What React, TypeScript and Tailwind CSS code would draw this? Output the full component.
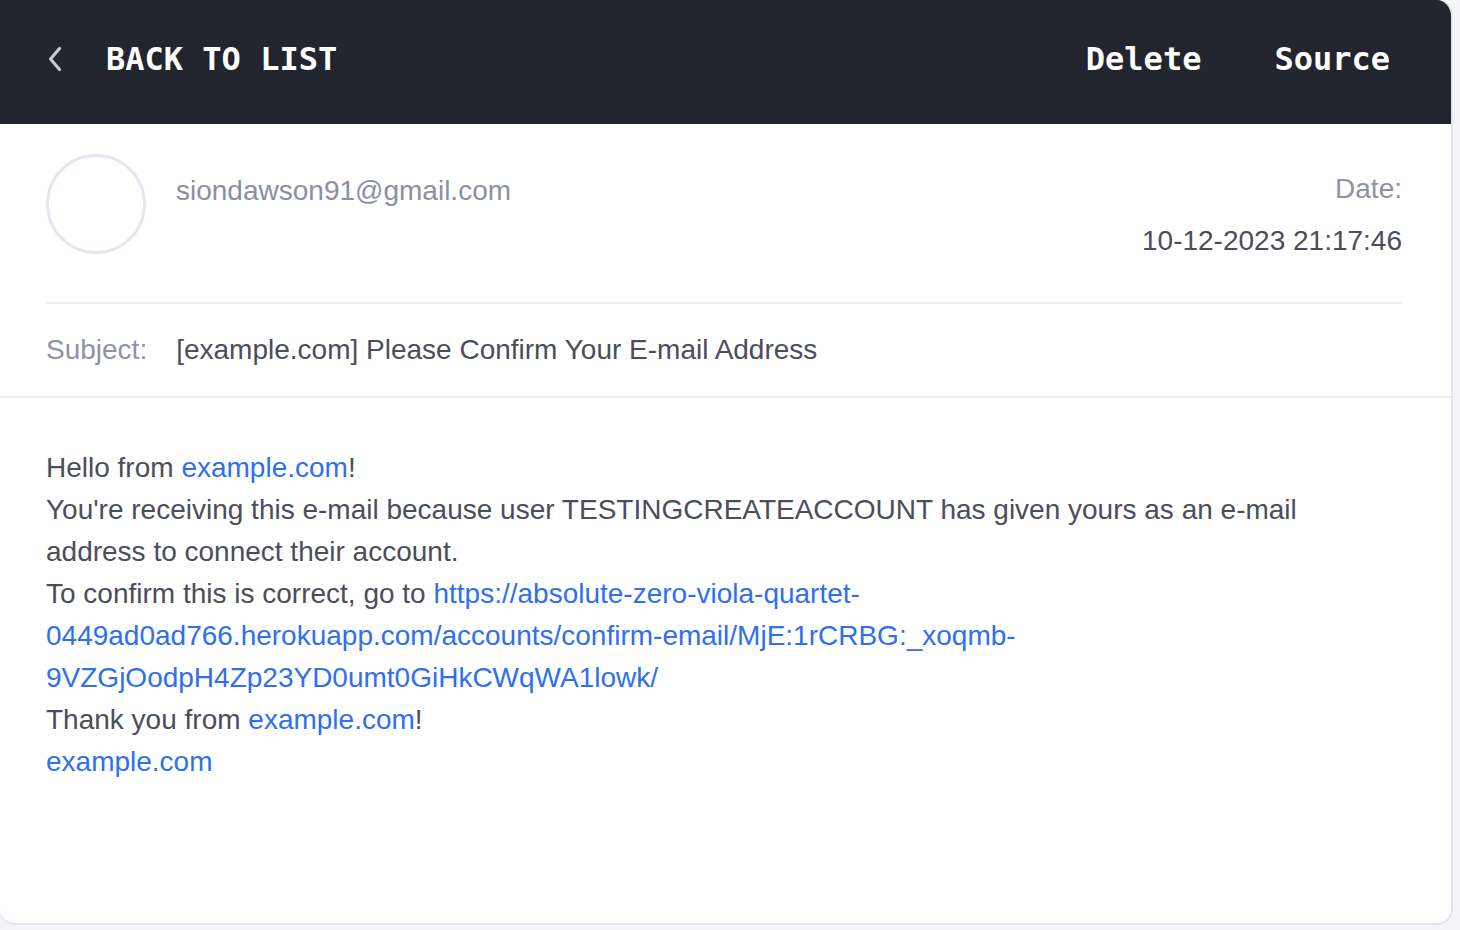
const SANS = 'font-["Liberation_Sans",Arial,sans-serif]';

function ChevronLeft() {
  return (
    <svg width="16" height="26" viewBox="0 0 16 26" fill="none" className="shrink-0">
      <path d="M12.5 2.5 L3.5 13 L12.5 23.5" stroke="#c9c9d3" strokeWidth={3.2} strokeLinecap="round" strokeLinejoin="round" />
    </svg>
  );
}

function Link({ children }: { children: React.ReactNode }) {
  return <a className="text-[#2f6ff0]">{children}</a>;
}

export default function App() {
  return (
    <div className="min-h-[930px] w-[1460px] bg-[#f4f4f8]">
      <div className={`w-[1453px] h-[925px] bg-white border-r-2 border-b-2 border-[#e4e4ee] rounded-br-[16px] rounded-bl-[16px] rounded-tr-[16px] overflow-hidden flex flex-col ${SANS}`}>
        {/* Top bar */}
        <div className="h-[124px] shrink-0 bg-[#22252d] flex items-center justify-between pl-[47px] pr-[61px] pb-[7px] font-['DejaVu_Sans_Mono',monospace] font-bold text-[32px] text-white">
          <div className="flex items-center gap-[43px]">
            <ChevronLeft />
            <span>BACK TO LIST</span>
          </div>
          <div className="flex items-center gap-[73px]">
            <span>Delete</span>
            <span>Source</span>
          </div>
        </div>

        {/* Header info */}
        <div className="pl-[46px] pr-[49px]">
          <div className="flex justify-between pt-[30px] pb-[40px] border-b-2 border-[#ececf3]">
            <div className="flex items-start gap-[30px]">
              <div className="w-[100px] h-[100px] rounded-full border-[3px] border-[#e6e6f0]" />
              <div className="pt-[16px] text-[28px] leading-[42px] text-[#8b8fa2]">siondawson91@gmail.com</div>
            </div>
            <div className="flex flex-col items-end text-[28px] leading-[42px]">
              <div className="mt-[14px] text-[#8e92a5]">Date:</div>
              <div className="mt-[10px] text-[#4b4e5a]">10-12-2023 21:17:46</div>
            </div>
          </div>
        </div>
        <div className="px-[46px]">
          <div className="flex gap-[29px] py-[25px] text-[28px] leading-[42px]">
            <span className="text-[#8e92a5]">Subject:</span>
            <span className="text-[#4b4e5a]">[example.com] Please Confirm Your E-mail Address</span>
          </div>
        </div>
        <div className="border-b-2 border-[#ececf3]" />

        {/* Body */}
        <div className="px-[46px] pt-[49px] text-[28px] leading-[42px] text-[#4b4e5a] whitespace-nowrap">
          <div>
            Hello from <Link>example.com</Link>!
          </div>
          <div>You're receiving this e-mail because user TESTINGCREATEACCOUNT has given yours as an e-mail</div>
          <div>address to connect their account.</div>
          <div>
            To confirm this is correct, go to{' '}
            <Link>
              https://absolute-zero-viola-quartet-
              <br />
              0449ad0ad766.herokuapp.com/accounts/confirm-email/MjE:1rCRBG:_xoqmb-
              <br />
              9VZGjOodpH4Zp23YD0umt0GiHkCWqWA1lowk/
            </Link>
          </div>
          <div>
            Thank you from <Link>example.com</Link>!
          </div>
          <div>
            <Link>example.com</Link>
          </div>
        </div>
      </div>
    </div>
  );
}
